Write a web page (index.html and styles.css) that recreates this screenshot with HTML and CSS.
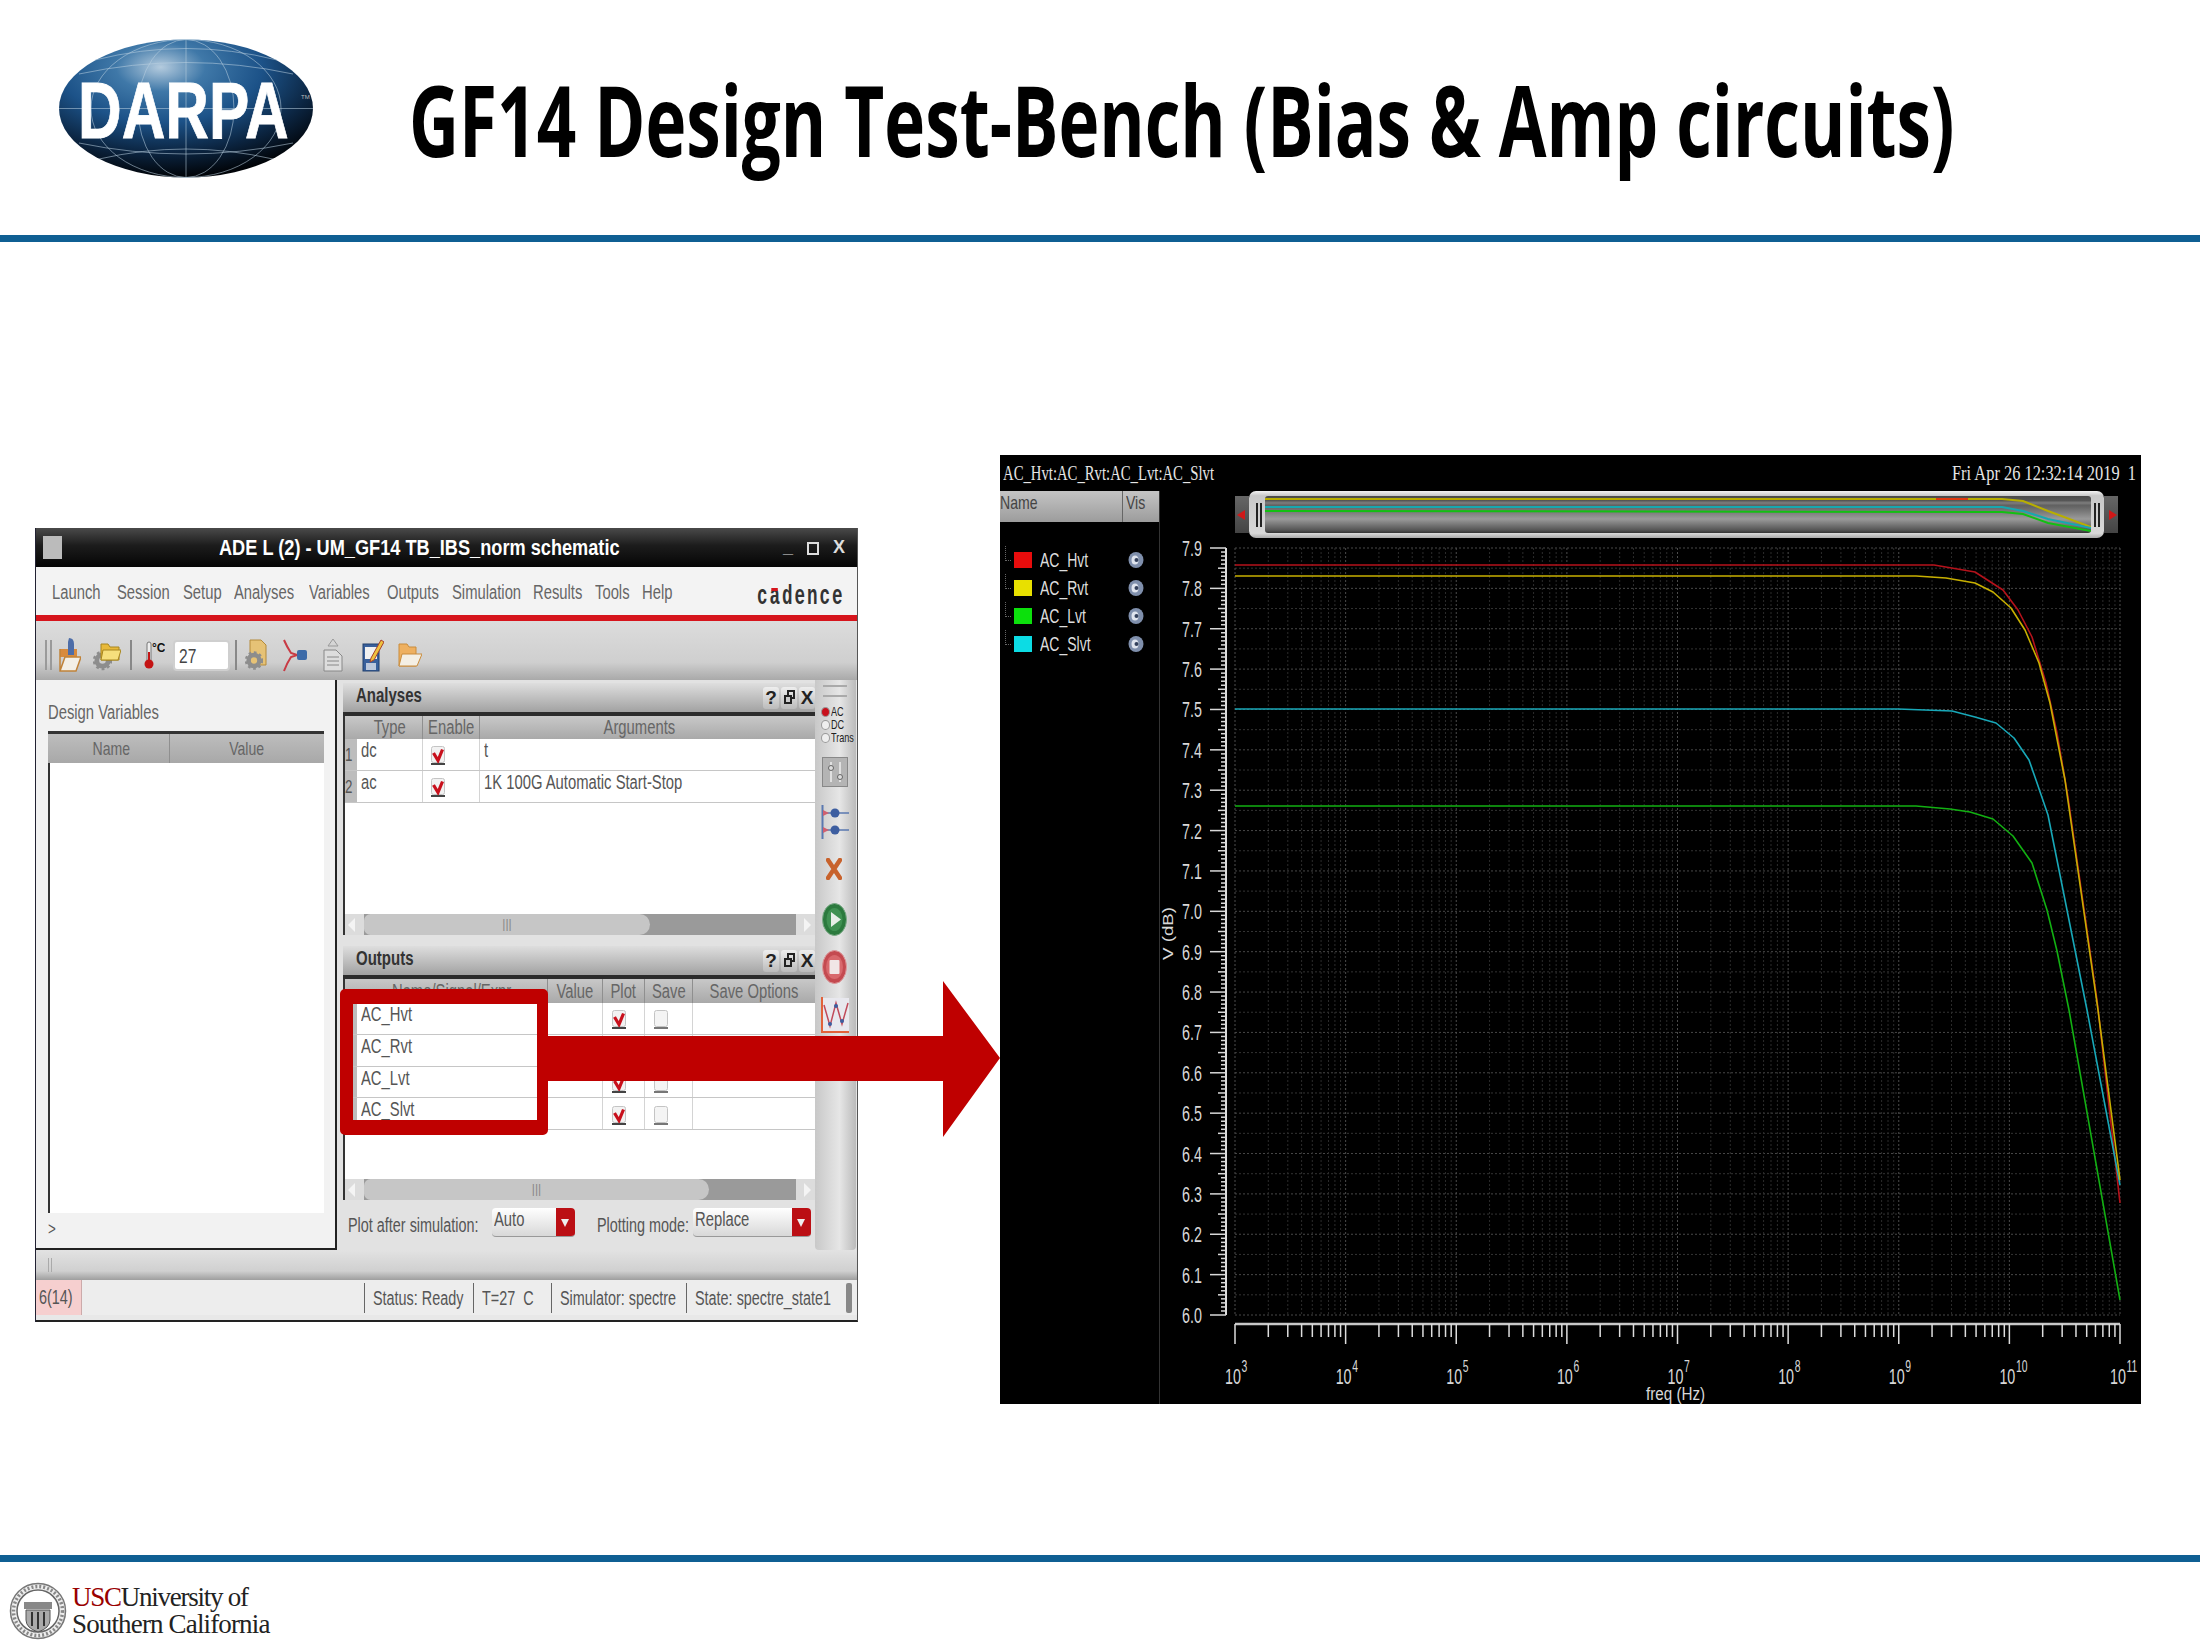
FILE: index.html
```html
<!DOCTYPE html>
<html lang="en">

<head>
    <meta charset="UTF-8">
    <title>GF14 Design Test-Bench (Bias &amp; Amp circuits)</title>
    <link rel="stylesheet" href="styles.css">
</head>

<body>
    <!-- shared small icons -->
    <svg class="sprite" aria-hidden="true">
        <symbol id="chk" viewBox="0 0 14 19">
            <rect x="0.5" y="0.5" width="13" height="16" rx="2" fill="#f2f2f2" stroke="#c4c4c4" />
            <path d="M2.5 7 L7 14.5 L11.5 3.5" fill="none" stroke="#c8101c" stroke-width="3.2" />
            <rect x="0" y="17" width="14" height="2" fill="#444" />
        </symbol>
        <symbol id="unchk" viewBox="0 0 14 19">
            <rect x="0.5" y="0.5" width="13" height="16" rx="2" fill="#f4f4f4" stroke="#c4c4c4" />
            <rect x="0" y="17" width="14" height="2" fill="#777" />
        </symbol>
        <symbol id="eye" viewBox="0 0 16 18">
            <ellipse cx="8" cy="9" rx="7.5" ry="8" fill="#7f8fac" />
            <ellipse cx="7" cy="9" rx="3.5" ry="4.5" fill="#dfe4ee" />
            <circle cx="8.5" cy="9" r="2" fill="#33405c" />
        </symbol>
        <symbol id="gear" viewBox="0 0 20 22">
            <circle cx="10" cy="11" r="6" fill="none" stroke="#8d8d8d" stroke-width="5" />
            <circle cx="10" cy="11" r="9" fill="none" stroke="#8d8d8d" stroke-width="2.5" stroke-dasharray="3 3" />
        </symbol>
    </svg>

    <header class="slide-head">
        <svg class="darpa" width="254" height="139" viewBox="0 0 254 139">
            <defs>
                <radialGradient id="globe" cx="0.4" cy="0.2" r="0.8">
                    <stop offset="0" stop-color="#b4cbde" />
                    <stop offset="0.22" stop-color="#3f78a8" />
                    <stop offset="0.5" stop-color="#1c5288" />
                    <stop offset="0.78" stop-color="#0b2440" />
                    <stop offset="1" stop-color="#010408" />
                </radialGradient>
            </defs>
            <ellipse cx="127" cy="69.5" rx="127" ry="69" fill="url(#globe)" />
            <g fill="none" stroke="#b9cfe0" stroke-opacity="0.55" stroke-width="1">
                <path d="M0 69.5 H254" />
                <path d="M127 1 V138" />
                <ellipse cx="127" cy="69.5" rx="48" ry="69" />
                <ellipse cx="127" cy="69.5" rx="95" ry="69" />
                <path d="M36 21 Q127 -2 218 21" />
                <path d="M20 35 Q127 12 234 35" />
                <path d="M20 104 Q127 126 234 104" />
                <path d="M40 120 Q127 100 214 120" />
            </g>
            <text class="darpa-word" transform="translate(19 99) scale(1 1.32)">DARPA</text>
            <text class="darpa-tm" x="242" y="60">TM</text>
        </svg>
        <h1 class="slide-title"><span>GF14 Design Test-Bench (Bias &amp; Amp circuits)</span></h1>
    </header>

    <main class="slide-body">
        <!-- ADE L window -->
        <section class="ade">
            <div class="ade-title">
                <div class="ade-badge"></div>
                <div class="ade-caption"><span class="nr">ADE L (2) - UM_GF14 TB_IBS_norm schematic</span></div>
                <div class="ade-winbtns"><span>_</span><span class="win-max"></span><span>X</span></div>
            </div>

            <div class="ade-menu">
                <span><b class="nr">Launch</b></span>
                <span><b class="nr">Session</b></span>
                <span><b class="nr">Setup</b></span>
                <span><b class="nr">Analyses</b></span>
                <span><b class="nr">Variables</b></span>
                <span><b class="nr">Outputs</b></span>
                <span><b class="nr">Simulation</b></span>
                <span><b class="nr">Results</b></span>
                <span><b class="nr">Tools</b></span>
                <span><b class="nr">Help</b></span>
                <div class="cadence"><span class="nr">c<i>a</i>dence</span></div>
            </div>

            <div class="ade-toolbar">
                <div class="tb-grip"></div>
                <svg class="tb-i1" width="24" height="36" viewBox="0 0 24 36">
                    <path d="M3 12 H20 V20 H3 Z" fill="#d88a3c" />
                    <path d="M12 1 Q17 1 17 7 V18 H11 V5 Z" fill="#4d6da8" />
                    <path d="M3 12 V34 H19 L24 20 H8 L3 34" fill="#f3efe6" stroke="#c08238" stroke-width="1.5" />
                </svg>
                <svg class="tb-i2" width="28" height="32" viewBox="0 0 28 32">
                    <use href="#gear" x="0" y="11" width="19" height="21" />
                    <path d="M8 5 H15 L17 8 H26 V21 H8 Z" fill="#e8b93a" stroke="#a8861e" />
                    <path d="M10 11 H28 L25 21 H8 Z" fill="#f6df7c" stroke="#a8861e" />
                </svg>
                <div class="tb-sep tb-sep1"></div>
                <svg class="tb-i3" width="21" height="28" viewBox="0 0 21 28">
                    <rect x="3" y="1" width="4" height="20" rx="2" fill="#eee" stroke="#777" />
                    <rect x="4" y="11" width="2" height="10" fill="#c41414" />
                    <circle cx="5" cy="23" r="4.5" fill="#c41414" />
                    <text class="deg" x="8" y="11">°C</text>
                </svg>
                <div class="tb-input"><span class="nr">27</span></div>
                <div class="tb-sep tb-sep2"></div>
                <svg class="tb-i4" width="22" height="32" viewBox="0 0 22 32">
                    <path d="M5 1 H16 L21 6 V26 H5 Z" fill="#e6c276" stroke="#b48a3a" />
                    <use href="#gear" x="0" y="11" width="18" height="21" />
                </svg>
                <svg class="tb-i5" width="24" height="33" viewBox="0 0 24 33">
                    <path d="M1 1 Q4 8 8 14 L14 16 M1 32 Q4 24 8 18 L14 16" fill="none" stroke="#c83a44" stroke-width="2" />
                    <rect x="14" y="11" width="10" height="10" rx="2" fill="#3d6ba8" />
                </svg>
                <svg class="tb-i6" width="20" height="34" viewBox="0 0 20 34">
                    <path d="M5 8 L10 1 L15 8 Z" fill="none" stroke="#999" />
                    <path d="M1 12 H13 L19 18 V33 H1 Z" fill="#ddd" stroke="#888" />
                    <path d="M4 19 H16 M4 23 H16 M4 27 H16" stroke="#888" />
                </svg>
                <svg class="tb-i7" width="22" height="34" viewBox="0 0 22 34">
                    <rect x="1" y="6" width="16" height="27" fill="#39609c" stroke="#23406e" />
                    <rect x="3" y="9" width="12" height="12" fill="#f1f1f1" />
                    <rect x="4" y="25" width="10" height="7" fill="#bcc8dc" />
                    <path d="M9 20 L19 2 L22 4 L12 22 L8 24 Z" fill="#eec23e" stroke="#a8402c" />
                </svg>
                <svg class="tb-i8" width="24" height="26" viewBox="0 0 24 26">
                    <path d="M1 2 H9 L11 5 H18 V24 H1 Z" fill="#eeb060" stroke="#c98c3c" />
                    <path d="M4 12 H24 L19 24 H1 Z" fill="#f4efe4" stroke="#c98c3c" />
                </svg>
            </div>

            <div class="ade-main">
                <!-- design variables -->
                <div class="vars">
                    <div class="vars-label"><span class="nr">Design Variables</span></div>
                    <div class="vars-table">
                        <div class="vars-head">
                            <div class="ctr"><span class="nr">Name</span></div>
                            <div class="ctr"><span class="nr">Value</span></div>
                        </div>
                    </div>
                    <div class="vars-foot"><span class="nr">&gt;</span></div>
                </div>

                <div class="center">
                    <!-- analyses -->
                    <div class="panel panel-an">
                        <div class="panel-head">
                            <strong class="nr">Analyses</strong>
                            <div class="panel-btns"><span>?</span><span class="btn-float"></span><span>X</span></div>
                        </div>
                        <div class="grid-an grid-head">
                            <div></div>
                            <div class="ctr"><span class="nr">Type</span></div>
                            <div class="ctr"><span class="nr">Enable</span></div>
                            <div class="ctr args-head"><span class="nr">Arguments</span></div>
                        </div>
                        <div class="grid-an row">
                            <div class="rownum"><span class="nr">1</span></div>
                            <div class="cell"><span class="nr">dc</span></div>
                            <div class="ctr"><svg class="box box-an"><use href="#chk" /></svg></div>
                            <div class="cell"><span class="nr">t</span></div>
                        </div>
                        <div class="grid-an row">
                            <div class="rownum"><span class="nr">2</span></div>
                            <div class="cell"><span class="nr">ac</span></div>
                            <div class="ctr"><svg class="box box-an"><use href="#chk" /></svg></div>
                            <div class="cell"><span class="nr">1K 100G Automatic Start-Stop</span></div>
                        </div>
                        <div class="blank"></div>
                        <div class="hscroll">
                            <div class="hs-left"></div>
                            <div class="hs-thumb thumb-an">|||</div>
                            <div class="hs-track"></div>
                            <div class="hs-right"></div>
                        </div>
                    </div>

                    <!-- outputs -->
                    <div class="panel panel-out">
                        <div class="panel-head">
                            <strong class="nr">Outputs</strong>
                            <div class="panel-btns"><span>?</span><span class="btn-float"></span><span>X</span></div>
                        </div>
                        <div class="grid-out grid-head">
                            <div></div>
                            <div class="ctr"><span class="nr">Name/Signal/Expr</span></div>
                            <div class="ctr"><span class="nr">Value</span></div>
                            <div class="ctr"><span class="nr">Plot</span></div>
                            <div class="ctr"><span class="nr">Save</span></div>
                            <div class="ctr"><span class="nr">Save Options</span></div>
                        </div>
                        <div class="grid-out row">
                            <div class="rownum"><span class="nr">1</span></div>
                            <div class="cell"><span class="nr">AC_Hvt</span></div>
                            <div></div>
                            <div class="ctr"><svg class="box box-plot"><use href="#chk" /></svg></div>
                            <div class="ctr"><svg class="box box-save"><use href="#unchk" /></svg></div>
                            <div></div>
                        </div>
                        <div class="grid-out row">
                            <div class="rownum"><span class="nr">2</span></div>
                            <div class="cell"><span class="nr">AC_Rvt</span></div>
                            <div></div>
                            <div class="ctr"><svg class="box box-plot"><use href="#chk" /></svg></div>
                            <div class="ctr"><svg class="box box-save"><use href="#unchk" /></svg></div>
                            <div></div>
                        </div>
                        <div class="grid-out row">
                            <div class="rownum"><span class="nr">3</span></div>
                            <div class="cell"><span class="nr">AC_Lvt</span></div>
                            <div></div>
                            <div class="ctr"><svg class="box box-plot"><use href="#chk" /></svg></div>
                            <div class="ctr"><svg class="box box-save"><use href="#unchk" /></svg></div>
                            <div></div>
                        </div>
                        <div class="grid-out row">
                            <div class="rownum"><span class="nr">4</span></div>
                            <div class="cell"><span class="nr">AC_Slvt</span></div>
                            <div></div>
                            <div class="ctr"><svg class="box box-plot"><use href="#chk" /></svg></div>
                            <div class="ctr"><svg class="box box-save"><use href="#unchk" /></svg></div>
                            <div></div>
                        </div>
                        <div class="blank"></div>
                        <div class="hscroll">
                            <div class="hs-left"></div>
                            <div class="hs-thumb thumb-out">|||</div>
                            <div class="hs-track"></div>
                            <div class="hs-right"></div>
                        </div>
                    </div>

                    <div class="plot-opts">
                        <div class="opt-label opt-a"><span class="nr">Plot after simulation:</span></div>
                        <div class="combo combo-a"><span class="nr">Auto</span><i></i></div>
                        <div class="opt-label opt-b"><span class="nr">Plotting mode:</span></div>
                        <div class="combo combo-b"><span class="nr">Replace</span><i></i></div>
                    </div>
                </div>

                <!-- right tool strip -->
                <div class="side">
                    <div class="side-grip"></div>
                    <div class="side-radios">
                        <div><i class="radio on"></i><span class="nr">AC</span></div>
                        <div><i class="radio"></i><span class="nr">DC</span></div>
                        <div><i class="radio"></i><span class="nr">Trans</span></div>
                    </div>
                    <svg class="s-tune" width="26" height="30" viewBox="0 0 26 30">
                        <rect x="0.5" y="0.5" width="25" height="29" fill="#b4b4b4" stroke="#888" />
                        <path d="M9 5 V25 M18 5 V25" stroke="#eee" stroke-width="1.5" />
                        <circle cx="9" cy="11" r="2.5" fill="#ddd" stroke="#666" />
                        <circle cx="18" cy="20" r="2.5" fill="#ddd" stroke="#666" />
                    </svg>
                    <svg class="s-conn" width="28" height="34" viewBox="0 0 28 34">
                        <path d="M1.5 0 V34" stroke="#5a78b0" stroke-width="2" />
                        <path d="M2 8 H28 M2 25 H28" stroke="#5a78b0" stroke-width="1.5" />
                        <path d="M2 5 L8 8 L2 11 Z M2 22 L8 25 L2 28 Z" fill="#d06070" />
                        <circle cx="14" cy="8" r="4.5" fill="#3d5ea0" />
                        <circle cx="14" cy="25" r="4.5" fill="#3d5ea0" />
                    </svg>
                    <svg class="s-del" width="16" height="22" viewBox="0 0 16 22">
                        <path d="M2 2 L14 20 M14 2 L2 20" stroke="#c8622c" stroke-width="4.5" stroke-linecap="round" />
                    </svg>
                    <svg class="s-run" width="25" height="33" viewBox="0 0 25 33">
                        <ellipse cx="12.5" cy="16.5" rx="12" ry="16" fill="#2c7a3e" stroke="#7aa986" />
                        <ellipse cx="12.5" cy="16.5" rx="8" ry="11.5" fill="#3f9152" />
                        <path d="M9 9 L19 16.5 L9 24 Z" fill="#e8efe8" />
                    </svg>
                    <svg class="s-stop" width="25" height="34" viewBox="0 0 25 34">
                        <ellipse cx="12.5" cy="17" rx="12" ry="16.5" fill="#c44a50" stroke="#dd9a9c" />
                        <ellipse cx="12.5" cy="17" rx="8.5" ry="12" fill="#d8686c" />
                        <rect x="7.5" y="10" width="10" height="14" rx="1" fill="#f1e6e6" />
                    </svg>
                    <svg class="s-wave" width="28" height="37" viewBox="0 0 28 37">
                        <rect x="1" y="1" width="27" height="33" fill="#e8e8ee" />
                        <path d="M1 0 V35 H28" fill="none" stroke="#e2623a" stroke-width="2" />
                        <path d="M3 8 L9 29 L15 6 L21 27 L27 6" fill="none" stroke="#c04a5a" stroke-width="1.5" />
                        <circle cx="9" cy="27" r="2" fill="#3d5ea0" />
                        <circle cx="15" cy="9" r="2" fill="#3d5ea0" />
                        <circle cx="21" cy="24" r="2" fill="#3d5ea0" />
                    </svg>
                </div>
            </div>

            <div class="ade-strip"><i></i></div>

            <div class="ade-status">
                <div class="st-err"><span class="nr">6(14)</span></div>
                <div class="st-cell st-blank"></div>
                <div class="st-cell st-status"><span class="nr">Status: Ready</span></div>
                <div class="st-cell st-temp"><span class="nr">T=27 &nbsp;C</span></div>
                <div class="st-cell st-sim"><span class="nr">Simulator: spectre</span></div>
                <div class="st-cell st-state"><span class="nr">State: spectre_state1</span></div>
                <i class="st-grip"></i>
            </div>
        </section>

        <!-- waveform window -->
        <section class="wave">
            <div class="wave-top">
                <span class="nr">AC_Hvt:AC_Rvt:AC_Lvt:AC_Slvt</span>
                <span class="nr wave-date">Fri Apr 26 12:32:14 2019 &nbsp;1</span>
            </div>
            <div class="wave-main">
                <aside class="legend">
                    <div class="legend-head">
                        <div class="lh-name"><span class="nr">Name</span></div>
                        <div class="lh-vis"><span class="nr">Vis</span></div>
                    </div>
                    <ul class="legend-list">
                        <li><i class="sw sw-red"></i><span class="nr">AC_Hvt</span><svg class="eye"><use href="#eye" /></svg></li>
                        <li><i class="sw sw-yellow"></i><span class="nr">AC_Rvt</span><svg class="eye"><use href="#eye" /></svg></li>
                        <li><i class="sw sw-green"></i><span class="nr">AC_Lvt</span><svg class="eye"><use href="#eye" /></svg></li>
                        <li><i class="sw sw-cyan"></i><span class="nr">AC_Slvt</span><svg class="eye"><use href="#eye" /></svg></li>
                    </ul>
                </aside>
                <div class="chart-col">
                    <div class="scroller">
                        <div class="sc-cap sc-cap-l"></div>
                        <div class="sc-frame">
                            <i class="sc-grip"></i>
                            <svg class="sc-track" width="826" height="37" viewBox="0 0 826 37">
                                <path d="M0 7 H826" stroke="#777" stroke-width="3" />
                                <polyline points="0,3 737,3 758,5 783,15 826,31" class="mini mini-yellow" />
                                <polyline points="671,3 703,3" class="mini mini-red" />
                                <polyline points="0,11 737,11 758,15 783,23 826,32" class="mini mini-cyan" />
                                <polyline points="0,15 737,16 758,18 783,27 826,35" class="mini mini-green" />
                            </svg>
                            <i class="sc-grip"></i>
                        </div>
                        <div class="sc-cap sc-cap-r"></div>
                    </div>
                    <svg id="chart" class="chart" width="981" height="866" viewBox="0 0 981 866"></svg>
                </div>
            </div>
        </section>

        <!-- callout over the outputs table -->
        <div class="callout"></div>
        <svg class="arrow" width="452" height="156" viewBox="0 0 452 156">
            <polygon points="0,55 395,55 395,0 452,77 395,156 395,100 0,100" fill="#bf0000" />
        </svg>
    </main>

    <footer class="slide-foot">
        <svg class="seal" width="58" height="58" viewBox="0 0 58 58">
            <circle cx="29" cy="29" r="27.5" fill="#eee" stroke="#777" stroke-width="1.5" />
            <circle cx="29" cy="29" r="21" fill="#fff" stroke="#666" stroke-width="1.5" />
            <circle cx="29" cy="29" r="24.5" fill="none" stroke="#888" stroke-width="3.5" stroke-dasharray="2 2" />
            <path d="M15 20 H43 V27 H15 Z" fill="#888" />
            <path d="M17 28 H41 V38 Q41 46 29 50 Q17 46 17 38 Z" fill="#aaa" stroke="#555" />
            <path d="M23 30 V44 M29 30 V47 M35 30 V44" stroke="#333" stroke-width="2" />
        </svg>
        <div class="usc-word">
            <div class="usc-l1"><span class="usc-red">USC</span>University of</div>
            <div class="usc-l2">Southern California</div>
        </div>
    </footer>

    <script src="plot.js"></script>
</body>

</html>
```

FILE: styles.css
```css
/* slide */
html, body {
    margin: 0;
    padding: 0;
}

body {
    width: 2200px;
    height: 1650px;
    overflow: hidden;
    background-color: #fff;
    font-family: "Liberation Sans", Arial, sans-serif;
    color: #555;
}

.sprite {
    position: absolute;
    width: 0;
    height: 0;
}

/* squeezed screenshot text, the source picture is stretched */
.nr {
    display: inline-block;
    white-space: nowrap;
    font-weight: normal;
    transform: scaleX(0.74);
    transform-origin: left center;
}

.ctr {
    display: flex;
    justify-content: center;
    align-items: center;
    white-space: nowrap;
}

.ctr .nr {
    transform-origin: center center;
}

/* header */
.slide-head {
    display: flex;
    align-items: flex-start;
    height: 196px;
    padding: 39px 0 0 59px;
    border-bottom: 7px solid #0f5f93;
}

.darpa {
    flex: none;
}

.darpa-word {
    font-family: "Liberation Sans", Arial, sans-serif;
    font-weight: bold;
    font-size: 60.5px;
    fill: #fff;
    stroke: #fff;
    stroke-width: 0.6;
}

.darpa-tm {
    font-size: 6px;
    fill: #bbb;
}

.slide-title {
    width: 1560px;
    margin: 30px 0 0 96px;
    font-family: "Open Sans", "Noto Sans", sans-serif;
    font-size: 69.2px;
    font-weight: bold;
    line-height: 70px;
    color: #000;
    white-space: nowrap;
    flex: none;
}

.slide-title span {
    display: inline-block;
    transform: scaleY(1.414);
    transform-origin: left top;
}

/* middle area */
.slide-body {
    position: relative;
    display: flex;
    align-items: flex-start;
    height: 1313px;
}

.callout {
    position: absolute;
    left: 340px;
    top: 747px;
    width: 184px;
    height: 116px;
    border-style: solid;
    border-color: #bf0000;
    border-width: 15px 11px 15px 13px;
    border-radius: 5px;
}

.arrow {
    position: absolute;
    left: 548px;
    top: 739px;
}

/* ADE L window */
.ade {
    width: 821px;
    margin: 286px 0 0 36px;
    background-color: #e4e4e4;
    border-bottom: 2px solid #222;
    border-right: 1px solid #555;
    box-shadow: -1px 0 0 #223;
    flex: none;
}

.ade-title {
    display: flex;
    align-items: center;
    height: 39px;
    background: linear-gradient(#4a4a4a, #1c1c1c 45%, #050505);
    color: #fff;
}

.ade-badge {
    width: 19px;
    height: 23px;
    margin-left: 7px;
    background-color: #bbb;
}

.ade-caption {
    width: 401px;
    margin-left: 157px;
    font-size: 22px;
    line-height: 39px;
}

.ade-caption .nr {
    font-weight: bold;
    transform: scaleX(0.826);
}

.ade-winbtns {
    display: flex;
    gap: 14px;
    margin-left: auto;
    margin-right: 12px;
    font-size: 18px;
    font-weight: bold;
    color: #ddd;
}

.win-max {
    width: 8px;
    height: 9px;
    margin-top: 5px;
    border: 2px solid #ddd;
}

.ade-menu {
    display: grid;
    grid-template-columns: 65px 66px 51px 75px 78px 65px 81px 62px 47px 32px 1fr;
    align-items: center;
    height: 48px;
    padding-left: 16px;
    background-color: #f3f3f3;
    border-bottom: 6px solid #d6141c;
    font-size: 20px;
    color: #666;
}

.ade-menu > span {
    margin-top: 3px;
}

.cadence {
    margin: 12px 0 0 83px;
    width: 84px;
    font-family: "Liberation Mono", monospace;
    font-size: 27px;
    color: #333;
}

.cadence .nr {
    font-weight: bold;
    letter-spacing: 3px;
    transform: scaleX(0.65);
}

.cadence i {
    position: relative;
    font-style: normal;
}

.cadence i::before {
    content: "";
    position: absolute;
    left: 3px;
    right: 6px;
    top: 6px;
    height: 3px;
    background-color: #d6141c;
}

.ade-toolbar {
    display: flex;
    align-items: center;
    height: 59px;
    padding: 9px 0 0 9px;
    box-sizing: border-box;
    background: linear-gradient(#dcdcdc, #cfcfcf 70%, #a9a9a9);
}

.tb-grip {
    width: 3px;
    height: 30px;
    margin-right: 5px;
    border-left: 2px solid #9a9a9a;
    border-right: 2px solid #9a9a9a;
}

.tb-i1 { margin-right: 12px; }
.tb-i2 { margin-right: 9px; }
.tb-i3 { margin: 0 8px 0 0; }
.tb-i4 { margin-right: 16px; }
.tb-i5 { margin-right: 16px; }
.tb-i6 { margin-right: 19px; }
.tb-i7 { margin-right: 14px; }

.tb-sep {
    width: 2px;
    height: 30px;
    background-color: #888;
}

.tb-sep1 { margin-right: 12px; }
.tb-sep2 { margin: 0 8px 0 5px; }

.deg {
    font-size: 12px;
    font-weight: bold;
    fill: #111;
}

.tb-input {
    width: 57px;
    height: 31px;
    padding-left: 4px;
    box-sizing: border-box;
    background-color: #fff;
    border: 2px solid #cfcfcf;
    border-radius: 4px;
    font-size: 21px;
    line-height: 27px;
    color: #444;
}

.ade-main {
    display: flex;
    height: 570px;
    background-color: #e2e2e2;
}

/* design variables */
.vars {
    display: flex;
    flex-direction: column;
    width: 276px;
    height: 568px;
    padding: 0 11px 0 12px;
    background-color: #f2f2f2;
    border-right: 2px solid #222;
    border-bottom: 2px solid #222;
}

.vars-label {
    height: 51px;
    padding-top: 20px;
    box-sizing: border-box;
    font-size: 20px;
    line-height: 24px;
    color: #666;
}

.vars-table {
    flex: 0 0 482px;
    background-color: #fff;
    border-left: 2px solid #333;
    box-sizing: border-box;
}

.vars-head {
    display: grid;
    grid-template-columns: 121px 1fr;
    height: 29px;
    margin-left: -2px;
    border-top: 3px solid #333;
    background: linear-gradient(#bdbdbd, #a8a8a8);
    font-size: 19px;
    color: #666;
}

.vars-head .ctr:first-child {
    padding-left: 5px;
}

.vars-head .ctr + .ctr {
    border-left: 1px solid #8f8f8f;
}

.vars-foot {
    height: 30px;
    font-size: 18px;
    line-height: 32px;
}

.center {
    display: flex;
    flex-direction: column;
    width: 472px;
    margin-left: 6px;
    padding-top: 3px;
    box-sizing: border-box;
}

.panel {
    display: flex;
    flex-direction: column;
    background-color: #fff;
    border-left: 2px solid #333;
    box-sizing: border-box;
}

.panel-an {
    height: 252px;
    margin-bottom: 11px;
}

.panel-out {
    height: 254px;
}

.panel-head {
    display: flex;
    align-items: center;
    height: 24px;
    padding: 0 0 5px 13px;
    margin-left: -2px;
    background: linear-gradient(#dedede, #a2a2a2);
    border-bottom: 4px solid #2c2c2c;
    font-size: 20px;
    color: #333;
    flex: none;
}

.panel-head strong {
    font-weight: bold;
    transform: scaleX(0.75);
}

.panel-btns {
    display: flex;
    gap: 2px;
    margin: 3px 0 -3px auto;
}

.panel-btns span {
    width: 16px;
    height: 22px;
    border-radius: 3px;
    background: linear-gradient(#eee, #bbb);
    font-size: 19px;
    font-weight: bold;
    line-height: 22px;
    text-align: center;
    color: #222;
}

.btn-float {
    position: relative;
}

.btn-float::before,
.btn-float::after {
    content: "";
    position: absolute;
    width: 8px;
    height: 9px;
    border: 2px solid #222;
    box-sizing: border-box;
}

.btn-float::before {
    left: 6px;
    top: 3px;
}

.btn-float::after {
    left: 3px;
    top: 8px;
    background-color: #ccc;
}

.grid-an {
    display: grid;
    grid-template-columns: 12px 65px 57px 1fr;
}

.grid-out {
    display: grid;
    grid-template-columns: 12px 190px 55px 42px 48px 1fr;
}

.grid-head {
    flex: none;
    height: 23px;
    background: linear-gradient(#c8c8c8, #a9a9a9);
    font-size: 20px;
    color: #666;
}

.grid-out.grid-head {
    height: 24px;
}

.grid-head > div + div + div {
    border-left: 1px solid #8f8f8f;
}

.args-head {
    padding-right: 16px;
}

.row {
    flex: none;
    height: 31.75px;
    box-sizing: border-box;
    border-bottom: 1px solid #c6c6c6;
    font-size: 20px;
    color: #555;
}

.row > div + div + div {
    border-left: 1px solid #d4d4d4;
}

.rownum {
    background-color: #bdbdbd;
    padding-top: 6px;
    font-size: 18px;
}

.cell {
    padding-left: 4px;
    line-height: 23px;
    overflow: hidden;
}

.box {
    width: 14px;
    height: 19px;
    margin-top: 3px;
}

.box-an { margin-right: 26px; }
.box-plot { margin-right: 10px; }
.box-save { margin-right: 16px; }

.blank {
    flex: 1;
}

.hscroll {
    display: flex;
    flex: none;
    height: 21px;
    background-color: #9a9a9a;
}

.hs-left, .hs-right {
    position: relative;
    width: 19px;
    background-color: #dcdcdc;
    flex: none;
}

.hs-left::after, .hs-right::after {
    content: "";
    position: absolute;
    top: 4px;
    border-top: 7px solid transparent;
    border-bottom: 7px solid transparent;
}

.hs-left::after {
    left: 3px;
    border-right: 7px solid #f4f4f4;
}

.hs-right::after {
    right: 4px;
    border-left: 7px solid #f4f4f4;
}

.hs-thumb {
    height: 21px;
    border-radius: 10px 16px 16px 10px;
    background-color: #c6c6c6;
    font-size: 12px;
    line-height: 21px;
    text-align: center;
    color: #888;
    flex: none;
}

.thumb-an { width: 286px; }
.thumb-out { width: 345px; }

.hs-track {
    flex: 1;
}

.plot-opts {
    display: flex;
    align-items: center;
    height: 50px;
    font-size: 20px;
    color: #555;
}

.opt-label {
    white-space: nowrap;
}

.opt-a { width: 144px; margin-left: 5px; }
.opt-b { width: 96px; margin-left: 22px; }

.opt-label .nr {
    transform: scaleX(0.72);
}

.combo {
    display: flex;
    height: 29px;
    margin-top: -6px;
    border-radius: 4px;
    background: linear-gradient(#fff, #d8d8d8);
    border-bottom: 1px solid #999;
    line-height: 22px;
    overflow: hidden;
    padding-left: 2px;
    box-sizing: border-box;
}

.combo-a { width: 83px; }
.combo-b { width: 118px; }

.combo i {
    position: relative;
    width: 19px;
    margin-left: auto;
    background-color: #bb0f14;
    flex: none;
}

.combo i::after {
    content: "";
    position: absolute;
    left: 5px;
    top: 11px;
    border-top: 8px solid #eee;
    border-left: 4px solid transparent;
    border-right: 4px solid transparent;
}

/* right tool strip */
.side {
    position: relative;
    display: flex;
    flex-direction: column;
    width: 41px;
    padding-left: 6px;
    box-sizing: border-box;
    background: linear-gradient(to right, #c8c8c8, #e6e6e6 60%, #bbb);
    border-radius: 0 0 4px 4px;
}

.side-grip {
    width: 24px;
    height: 8px;
    margin: 5px 0 8px 2px;
    border-top: 2px solid #aaa;
    border-bottom: 2px solid #aaa;
    flex: none;
}

.side-radios {
    height: 42px;
    font-size: 13px;
    line-height: 13px;
    color: #222;
}

.side-radios div {
    display: flex;
    align-items: center;
    height: 13px;
}

.side-radios .nr {
    transform: scaleX(0.7);
}

.radio {
    width: 9px;
    height: 10px;
    margin-right: 1px;
    border-radius: 50%;
    background-color: #eee;
    border: 1px solid #999;
    box-sizing: border-box;
    flex: none;
}

.radio.on {
    background-color: #c8101c;
}

.s-tune { margin: 10px 0 0 1px; flex: none; }
.s-conn { margin: 18px 0 0 0; flex: none; }
.s-del { margin: 19px 0 0 5px; flex: none; }
.s-run { margin: 23px 0 0 1px; flex: none; }
.s-stop { margin: 14px 0 0 1px; flex: none; }
.s-wave { margin: 13px 0 0 0; flex: none; }

.ade-strip {
    display: flex;
    align-items: center;
    height: 30px;
    padding-left: 12px;
    background: linear-gradient(#e2e2e2, #d0d0d0 70%, #9e9e9e);
}

.ade-strip i {
    width: 2px;
    height: 14px;
    border-left: 1px solid #aaa;
    border-right: 1px solid #aaa;
}

.ade-status {
    display: flex;
    align-items: center;
    height: 40px;
    background-color: #ededed;
    border-bottom: 5px solid #e8e8e8;
    box-sizing: border-box;
    font-size: 20px;
    color: #555;
}

.ade-status .nr {
    transform: scaleX(0.72);
}

.st-err {
    width: 42px;
    height: 35px;
    padding-left: 3px;
    background-color: #f6cfcf;
    border-right: 1px solid #caa;
    line-height: 35px;
}

.st-cell {
    height: 30px;
    padding-left: 8px;
    box-sizing: border-box;
    border-left: 1px solid #666;
    line-height: 30px;
    white-space: nowrap;
}

.st-blank {
    width: 282px;
    border-left: 0;
}

.st-status { width: 109px; }
.st-temp { width: 78px; }
.st-sim { width: 135px; }
.st-state { width: 160px; }

.st-grip {
    width: 6px;
    height: 30px;
    background-color: #888;
    border-radius: 2px;
}

/* waveform window */
.wave {
    display: flex;
    flex-direction: column;
    width: 1141px;
    height: 949px;
    margin: 213px 0 0 142px;
    background-color: #000;
    color: #ddd;
    flex: none;
}

.wave-top {
    display: flex;
    align-items: center;
    justify-content: space-between;
    height: 36px;
    padding: 0 0 0 3px;
    font-family: "Liberation Serif", serif;
    font-size: 20px;
    color: #e6e6e6;
    flex: none;
}

.wave-top .nr {
    transform: scaleX(0.736);
}

.wave-top .wave-date {
    width: 189px;
    transform: scaleX(0.82);
}

.wave-main {
    display: flex;
    flex: 1;
}

.legend {
    width: 160px;
    border-right: 1px solid #333;
    box-sizing: border-box;
    flex: none;
}

.legend-head {
    display: grid;
    grid-template-columns: 122px 1fr;
    height: 31px;
    background: linear-gradient(#c4c4c4, #9c9c9c);
    font-size: 19px;
    line-height: 24px;
    color: #444;
}

.lh-vis {
    padding-left: 3px;
    border-left: 1px solid #666;
}

.legend-list {
    margin: 24px 0 0 0;
    padding: 0 0 0 14px;
    list-style-type: none;
    font-size: 20px;
}

.legend-list li {
    position: relative;
    display: flex;
    align-items: center;
    height: 28px;
}

.legend-list li::before {
    content: "";
    position: absolute;
    left: -9px;
    top: 0;
    width: 5px;
    height: 14px;
    border-left: 1px dotted #666;
    border-bottom: 1px dotted #666;
}

.legend-list .nr {
    width: 88px;
    margin-left: 8px;
    transform: scaleX(0.7);
    color: #ddd;
}

.sw {
    width: 18px;
    height: 16px;
    flex: none;
}

.sw-red { background-color: #e80c0c; }
.sw-yellow { background-color: #e8e000; }
.sw-green { background-color: #0ce00c; }
.sw-cyan { background-color: #0cdce4; }

.eye {
    width: 16px;
    height: 18px;
    flex: none;
}

.chart-col {
    display: flex;
    flex-direction: column;
    flex: 1;
}

.scroller {
    display: flex;
    align-items: center;
    height: 47px;
    padding-left: 75px;
    flex: none;
}

.sc-cap {
    width: 14px;
    height: 37px;
    background: linear-gradient(#666, #444);
    flex: none;
    position: relative;
}

.sc-cap::after {
    content: "";
    position: absolute;
    top: 14px;
    border-top: 5px solid transparent;
    border-bottom: 5px solid transparent;
}

.sc-cap-l::after {
    left: 2px;
    border-right: 8px solid #d01818;
}

.sc-cap-r::after {
    right: 1px;
    border-left: 8px solid #d01818;
}

.sc-frame {
    display: flex;
    align-items: center;
    width: 855px;
    height: 47px;
    padding: 0 4px;
    box-sizing: border-box;
    border-radius: 7px;
    background: linear-gradient(#f4f4f4, #c8c8c8 10%, #d8d8d8 90%, #aaa);
    justify-content: space-between;
    flex: none;
}

.sc-grip {
    width: 2px;
    height: 24px;
    margin: 0 3px;
    border-left: 2px solid #222;
    border-right: 2px solid #222;
    flex: none;
}

.sc-track {
    background: linear-gradient(#4a4a4a, #666 30%, #9a9a9a 62%, #555 92%, #333);
    border-radius: 3px;
    flex: none;
}

.mini {
    fill: none;
    stroke-width: 2;
}

.mini-yellow { stroke: #b8ae00; }
.mini-red { stroke: #e03a10; }
.mini-cyan { stroke: #16a8b0; }
.mini-green { stroke: #12c012; }

.chart {
    overflow: visible;
}

.chart text {
    font-family: "Liberation Sans", Arial, sans-serif;
    fill: #d8d8d8;
}

/* footer */
.slide-foot {
    display: flex;
    align-items: flex-start;
    height: 61px;
    padding: 20px 0 0 9px;
    border-top: 7px solid #0f5f93;
}

.usc-word {
    margin: 2px 0 0 5px;
    font-family: "Liberation Serif", serif;
    font-size: 27px;
    line-height: 26.5px;
    color: #222;
    white-space: nowrap;
}

.usc-l1 {
    letter-spacing: -1.25px;
}

.usc-l2 {
    letter-spacing: -0.85px;
}

.usc-red {
    color: #990000;
}
```

FILE: plot.js
```js
// waveform chart, coordinates are slide pixels minus the chart origin
const chart = document.getElementById('chart');
const originX = 1160;
const originY = 538;
const gridLeft = 1235;
const gridRight = 2120;
const yTop = 548;
const yBottom = 1315;
const decade = (gridRight - gridLeft) / 8;
const yUnit = (yBottom - yTop) / 1.9;

function add(tag, attrs, text) {
    const el = document.createElementNS('http://www.w3.org/2000/svg', tag);
    for (const key in attrs) {
        el.setAttribute(key, attrs[key]);
    }
    if (text) {
        el.textContent = text;
    }
    chart.appendChild(el);
    return el;
}

function line(x1, y1, x2, y2, stroke, width, dash) {
    const attrs = {
        x1: x1 - originX, y1: y1 - originY,
        x2: x2 - originX, y2: y2 - originY,
        stroke: stroke, 'stroke-width': width
    };
    if (dash) {
        attrs['stroke-dasharray'] = dash;
    }
    add('line', attrs);
}

// text squeezed sideways by sx, as in the stretched screenshot
function label(x, y, size, sx, text, rotate) {
    const turn = rotate ? ` rotate(${rotate})` : '';
    return add('text', {
        'font-size': size,
        transform: `translate(${x - originX} ${y - originY})${turn} scale(${sx} 1)`
    }, text);
}

// horizontal grid, one line every 0.05
for (let i = 0; i <= 38; i++) {
    const y = yTop + i * 0.05 * yUnit;
    line(gridLeft, y, gridRight, y, i % 2 === 0 ? '#484848' : '#333', 1, '2 2');
}

// vertical grid and x axis ticks, log spacing
line(gridLeft, 1324, gridRight, 1324, '#c8c8c8', 2.5);
for (let d = 0; d <= 8; d++) {
    const x0 = gridLeft + d * decade;
    line(x0, yTop, x0, yBottom, '#4c4c4c', 1, '2 2');
    line(x0, 1324, x0, 1344, '#ddd', 1.5);
    if (d === 8) {
        break;
    }
    for (let m = 2; m <= 9; m++) {
        const x = x0 + Math.log10(m) * decade;
        line(x, yTop, x, yBottom, '#2c2c2c', 1, '2 2');
        line(x, 1324, x, 1337, '#ddd', 1.5);
    }
}

// x axis labels
for (let d = 0; d <= 8; d++) {
    const x0 = gridLeft + d * decade;
    label(x0 - 10, 1384, 22, 0.65, '10');
    label(x0 + 6.5, 1372, 16, 0.65, String(d + 3));
}
label(1646, 1400, 19, 0.8, 'freq (Hz)');

// y axis, ticks every 0.01
line(1226, yTop, 1226, yBottom, '#ddd', 2);
for (let i = 0; i <= 190; i++) {
    const y = yTop + i * 0.01 * yUnit;
    let left = 1221;
    if (i % 10 === 0) {
        left = 1210;
    } else if (i % 5 === 0) {
        left = 1218;
    }
    line(left, y, 1226, y, '#d8d8d8', 1.5);
}
for (let i = 0; i <= 19; i++) {
    const y = yTop + i * 0.1 * yUnit;
    label(1182, y + 8, 22, 0.65, (7.9 - i * 0.1).toFixed(1));
}

// y axis title
label(1173, 960, 15, 1.25, 'V (dB)', -90);

// curves
const curves = [
    ['#b5121b', [[1235, 565], [1934, 565], [1975, 572], [2003, 590], [2018, 610], [2032, 637], [2046, 683], [2057, 733], [2068, 797], [2097, 1000], [2120, 1203]]],
    ['#18a8b8', [[1235, 709], [1898, 709], [1952, 711], [1975, 717], [1996, 723], [2014, 738], [2029, 760], [2036, 780], [2048, 815], [2087, 1010], [2120, 1185]]],
    ['#12b012', [[1235, 806], [1916, 806], [1950, 809], [1970, 812], [1993, 819], [2013, 836], [2032, 863], [2047, 910], [2057, 951], [2069, 1010], [2120, 1300]]],
    ['#c8b000', [[1235, 576], [1916, 576], [1946, 578], [1975, 583], [1993, 592], [2011, 608], [2025, 630], [2039, 663], [2050, 703], [2065, 780], [2098, 1010], [2120, 1180]]]
];
curves.forEach(([color, pts]) => {
    add('polyline', {
        points: pts.map(p => `${p[0] - originX},${p[1] - originY}`).join(' '),
        fill: 'none', stroke: color, 'stroke-width': 1.6, 'stroke-linejoin': 'round'
    });
});
```
